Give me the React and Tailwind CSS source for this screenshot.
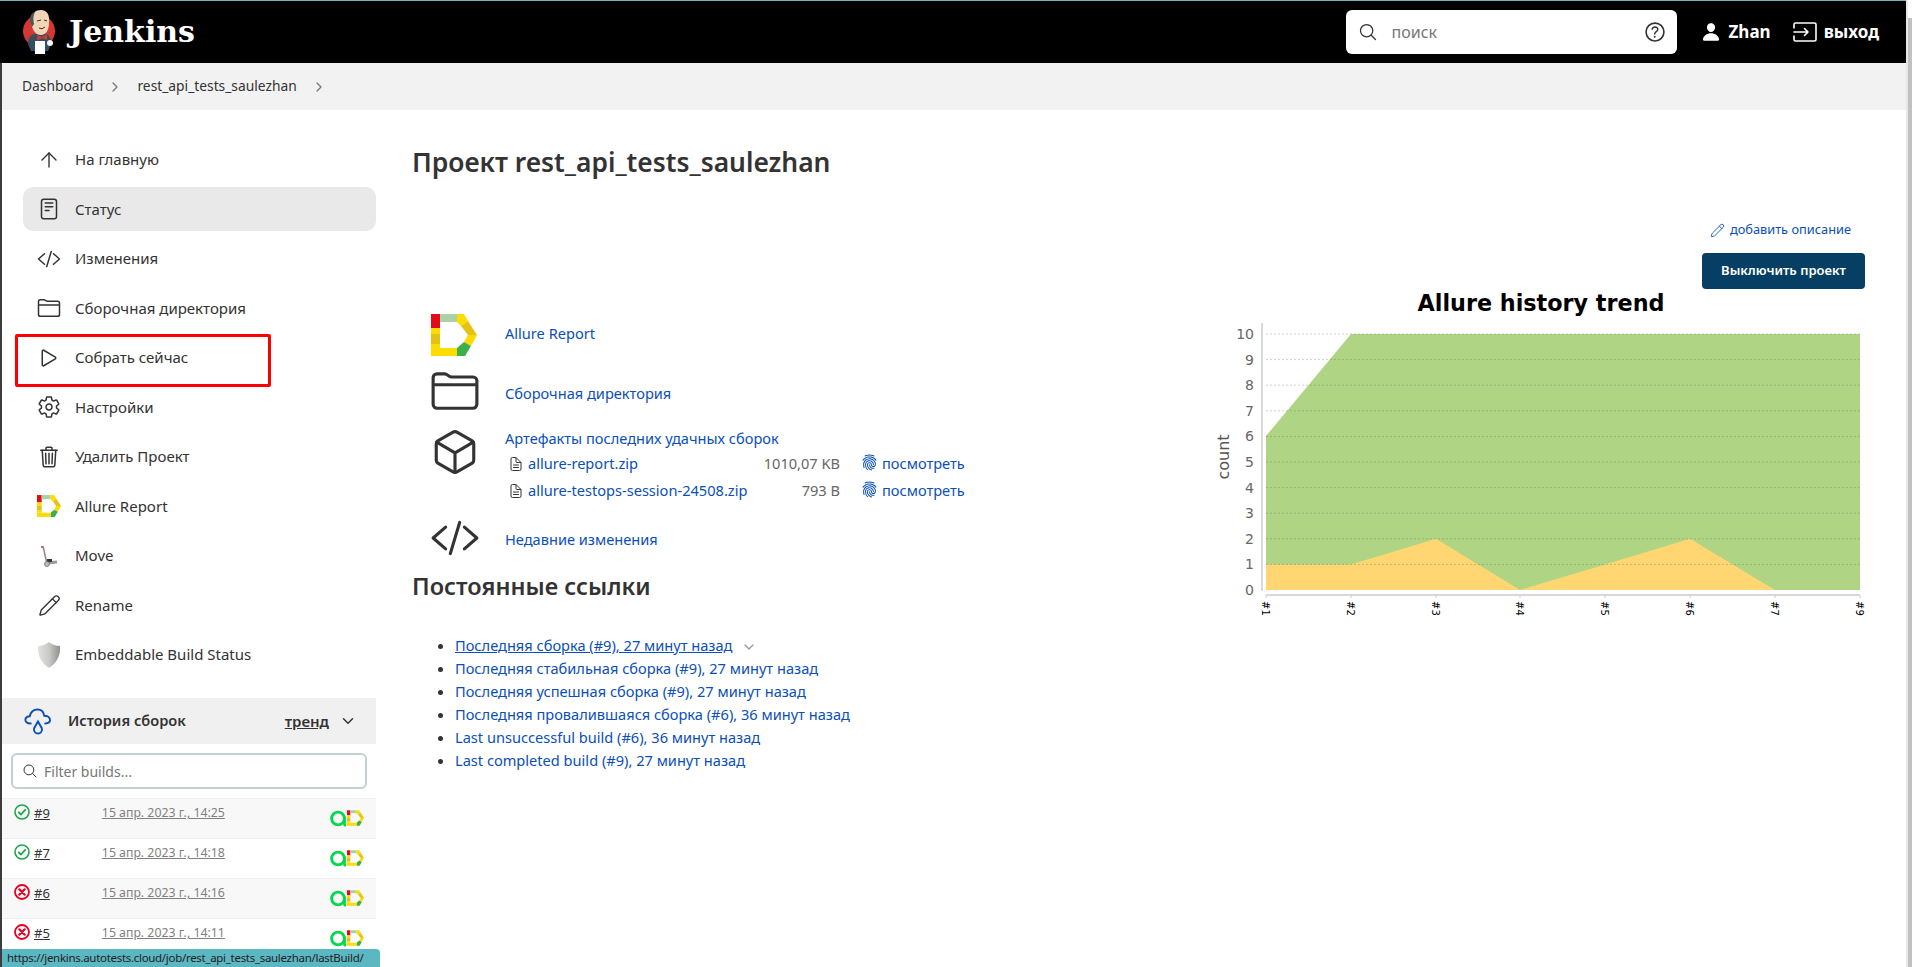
import {
  IoReaderOutline, IoCodeSlashOutline, IoFolderOutline, IoPlayOutline,
  IoSettingsOutline, IoTrashOutline, IoSearchOutline, IoHelpCircleOutline,
  IoPerson, IoCubeOutline, IoFingerPrint, IoChevronForward, IoChevronDown,
  IoDocumentTextOutline,
} from "react-icons/io5"
import { ArrowUp, Pencil } from "lucide-react"

function AllureIcon({ className }) {
  return (
    <svg viewBox="0 0 46 42" className={className}>
      <polygon points="0,0 9,0 9,14 0,14" fill="#e30b17" />
      <polygon points="9,0 26,0 26,8 9,8" fill="#a9d3a4" />
      <polygon points="26,0 33,0 37,7 30,12 26,8" fill="#ffdc00" />
      <polygon points="37,7 46,21 37,21 30,12" fill="#e6c214" />
      <polygon points="46,21 40,32 33,28 37,21" fill="#ffdc00" />
      <polygon points="40,32 34,42 26,42 26,34 33,28" fill="#3cae4a" />
      <polygon points="0,34 26,34 26,42 0,42" fill="#ffdc00" />
      <polygon points="0,14 9,14 9,20 0,20" fill="#ffdc00" />
      <polygon points="0,20 9,20 9,30 0,30" fill="#e3c214" />
      <polygon points="0,30 9,30 9,34 0,34" fill="#ffdc00" />
    </svg>
  )
}

function TestopsIcon() {
  return (
    <svg viewBox="0 0 18 18" className="w-[17px] h-[17px]">
      <circle cx="8.5" cy="9" r="6.8" fill="none" stroke="#00d94c" strokeWidth="3" />
      <path d="M15.3 8V14.5Q15.3 16 17 16" fill="none" stroke="#00d94c" strokeWidth="3" />
    </svg>
  )
}

function JenkinsLogo() {
  return (
    <svg viewBox="0 0 32 44" className="w-[32px] h-[44px]">
      <circle cx="16" cy="21" r="16" fill="#d33833" />
      <path d="M5 34Q5 25 12 24L24 24Q28 27 28 34L25 41H8Z" fill="#335061" />
      <path d="M8 12C7 3 13 0 18 0C24 0 27 5 26 13C26 20 23 25 18 25C12 25 9 19 8 12Z" fill="#f0d6b7" />
      <path d="M8 14C5 6 10 2 12 2C10 6 10 10 11 14L9 17Z" fill="#49555c" />
      <path d="M14 11L18 10M21 10L24 11M16 18Q19 20 22 17" stroke="#49331f" strokeWidth="1" fill="none" />
      <polygon points="14,25 19,27 24,24 24,30 19,28 14,31" fill="#d33833" />
      <rect x="12" y="31" width="10" height="13" fill="#fff" />
      <circle cx="27" cy="33" r="3" fill="#f5f5f5" />
    </svg>
  )
}

function MoveIcon() {
  return (
    <svg viewBox="0 0 20 24" className="w-[20px] h-[24px]">
      <path d="M2 3L4 3" stroke="#c62828" strokeWidth="1.5" />
      <path d="M4 2L8 20" stroke="#8a8a8a" strokeWidth="1.5" />
      <path d="M8 19L18 18" stroke="#9a9a9a" strokeWidth="3" />
      <rect x="8" y="15" width="5" height="3" fill="#333" />
      <circle cx="8" cy="20" r="2.5" fill="#bdbdbd" stroke="#666" strokeWidth="0.7" />
    </svg>
  )
}

function ShieldIcon() {
  return (
    <svg viewBox="0 0 24 26" className="w-[24px] h-[26px]">
      <defs>
        <linearGradient id="shield" x1="0" x2="1" y1="0" y2="0">
          <stop offset="0" stopColor="#e2e2e0" />
          <stop offset="0.5" stopColor="#c9c9c6" />
          <stop offset="1" stopColor="#8f8f8c" />
        </linearGradient>
      </defs>
      <path d="M12 0Q7 4 1 4Q0 18 12 26Q24 18 23 4Q17 4 12 0Z" fill="url(#shield)" />
    </svg>
  )
}

function CloudRainIcon() {
  return (
    <svg viewBox="0 0 28 28" className="w-[27px] h-[27px]" fill="none" stroke="#0b4fb8" strokeWidth="2" strokeLinecap="round">
      <path d="M7 16C3 16 1 14 1.5 11.5C2 9.5 4 8.5 6 8.5C7 4 10 1.5 14 1.5C18 1.5 20.5 4.5 21 8C24 8 27 9.5 27 12.5C27 15 25 16 22 16" />
      <path d="M14.5 14L18.5 21C19.5 24 17 26.5 14.5 26.5C12 26.5 9.5 24 10.5 21Z" />
    </svg>
  )
}

function ExitIcon() {
  return (
    <svg viewBox="0 0 24 20" className="w-[24px] h-[20px]" fill="none" stroke="#fff" strokeWidth="1.6" strokeLinecap="round" strokeLinejoin="round">
      <path d="M1 6V2.5Q1 1 2.5 1H21.5Q23 1 23 2.5V17.5Q23 19 21.5 19H2.5Q1 19 1 17.5V14" />
      <path d="M1 10H15M11.5 6.5L15 10L11.5 13.5" />
    </svg>
  )
}

function BuildStatus({ ok }) {
  if (ok) {
    return (
      <svg viewBox="0 0 16 16" className="w-[16px] h-[16px] mt-[1px] ml-[1px] shrink-0" fill="none" stroke="#1ea64b" strokeWidth="1.6" strokeLinecap="round" strokeLinejoin="round">
        <circle cx="8" cy="8" r="7" />
        <path d="M4.8 8.3L7 10.5L11.2 5.8" strokeWidth="1.8" />
      </svg>
    )
  }
  return (
    <svg viewBox="0 0 16 16" className="w-[16px] h-[16px] mt-[1px] ml-[1px] shrink-0" fill="none" stroke="#e6001f" strokeWidth="1.8" strokeLinecap="round">
      <circle cx="8" cy="8" r="7" />
      <path d="M5.3 5.3L10.7 10.7M10.7 5.3L5.3 10.7" strokeWidth="2.2" />
    </svg>
  )
}

const navItems = [
  { label: "На главную", icon: <ArrowUp className="w-6 h-6" strokeWidth={1.4} /> },
  { label: "Статус", icon: <IoReaderOutline className="w-6 h-6" />, active: true },
  { label: "Изменения", icon: <IoCodeSlashOutline className="w-6 h-6" /> },
  { label: "Сборочная директория", icon: <IoFolderOutline className="w-6 h-6" /> },
  { label: "Собрать сейчас", icon: <IoPlayOutline className="w-6 h-6" />, marked: true },
  { label: "Настройки", icon: <IoSettingsOutline className="w-6 h-6" /> },
  { label: "Удалить Проект", icon: <IoTrashOutline className="w-6 h-6" /> },
  { label: "Allure Report", icon: <AllureIcon className="w-6 h-[22px]" /> },
  { label: "Move", icon: <MoveIcon /> },
  { label: "Rename", icon: <Pencil className="w-[23px] h-[23px]" strokeWidth={1.4} /> },
  { label: "Embeddable Build Status", icon: <ShieldIcon /> },
]

const builds = [
  { num: "#9", date: "15 апр. 2023 г., 14:25", ok: true },
  { num: "#7", date: "15 апр. 2023 г., 14:18", ok: true },
  { num: "#6", date: "15 апр. 2023 г., 14:16", ok: false },
  { num: "#5", date: "15 апр. 2023 г., 14:11", ok: false },
]

const permalinks = [
  "Последняя стабильная сборка (#9), 27 минут назад",
  "Последняя успешная сборка (#9), 27 минут назад",
  "Последняя провалившаяся сборка (#6), 36 минут назад",
  "Last unsuccessful build (#6), 36 минут назад",
  "Last completed build (#9), 27 минут назад",
]

const artifacts = [
  { name: "allure-report.zip", size: "1010,07 KB" },
  { name: "allure-testops-session-24508.zip", size: "793 B" },
]

const chartX = [1266, 1351, 1436, 1520, 1605, 1690, 1775, 1860]
const chartNames = ["#1", "#2", "#3", "#4", "#5", "#6", "#7", "#9"]
const chartY = [589, 563.4, 537.8, 512.2, 486.6, 461, 435.4, 409.8, 384.2, 358.6, 333]

function Chart() {
  return (
    <svg viewBox="1200 288 665 352" className="w-[665px] h-[352px]" fontFamily="'DejaVu Sans', sans-serif">
      <text x="1541" y="310" textAnchor="middle" fontSize="22.3" fontWeight="700" fill="#000">Allure history trend</text>
      <polygon points="1266,435 1351,333 1860,333 1860,589 1266,589" fill="#afd584" />
      <polygon points="1266,563.4 1351,563.4 1436,537.8 1520,589 1605,563.4 1690,537.8 1775,589 1266,589" fill="#ffd672" />
      {chartY.slice(1).map((y) => (
        <line key={y} x1="1266" x2="1860" y1={y} y2={y} stroke="#555" strokeOpacity="0.28" strokeDasharray="2 2" />
      ))}
      {chartY.map((y, i) => (
        <text key={y} x="1254" y={y + 5} textAnchor="end" fontSize="14" fill="#666">{i}</text>
      ))}
      <line x1="1262" x2="1262" y1="322" y2="590" stroke="#ccc" strokeWidth="1.5" />
      <line x1="1266" x2="1860" y1="594" y2="594" stroke="#ccc" strokeWidth="1.5" />
      {chartX.map((x, i) => (
        <g key={x}>
          <line x1={x} x2={x} y1="594" y2="597" stroke="#ccc" />
          <text transform={`translate(${x - 4} 600) rotate(90)`} fontSize="10" fill="#000">{chartNames[i]}</text>
        </g>
      ))}
      <text transform="translate(1229 456) rotate(-90)" textAnchor="middle" fontSize="16" fill="#555">count</text>
    </svg>
  )
}

export default function App() {
  return (
    <div className="relative flex h-screen w-full overflow-hidden bg-white text-[15px] text-[#333] font-['Noto_Sans',sans-serif]">
      <div className="flex-1 min-w-0 flex flex-col">
        <div className="h-[1px] bg-[#7fb0b8]" />

        <header className="h-[62px] bg-black flex items-center pl-[23px] pr-[27px] text-white">
          <JenkinsLogo />
          <span className="ml-[14px] text-[30px] font-bold font-['DejaVu_Serif',serif] leading-none">Jenkins</span>
          <div className="ml-auto w-[331px] h-[44px] bg-white rounded-[6px] flex items-center pl-[12px] pr-[9px]">
            <IoSearchOutline className="w-5 h-5 text-[#333]" />
            <input placeholder="поиск" className="ml-[14px] flex-1 outline-none text-[16px] placeholder:text-[#777]" />
            <IoHelpCircleOutline className="w-[26px] h-[26px] text-[#333]" />
          </div>
          <IoPerson className="ml-[24px] w-[20px] h-[20px]" />
          <span className="ml-[8px] font-bold text-[17px]">Zhan</span>
          <div className="ml-[22px]"><ExitIcon /></div>
          <span className="ml-[7px] font-bold text-[17px]">выход</span>
        </header>

        <nav className="h-[47px] bg-[#f2f2f2] border-l-2 border-[#3c3c3c] flex items-center pl-[20px] text-[13.8px]">
          <span>Dashboard</span>
          <IoChevronForward className="ml-[15px] w-[14px] h-[14px] text-[#777]" />
          <span className="ml-[15px]">rest_api_tests_saulezhan</span>
          <IoChevronForward className="ml-[15px] w-[14px] h-[14px] text-[#777]" />
        </nav>

        <div className="flex-1 flex min-h-0">
          <div className="w-[2px] bg-[#3c3c3c]" />

          <aside className="w-[374px] pt-[27.5px]">
            <div className="pl-[21px]">
              {navItems.map((item) => (
                <div key={item.label} className={`relative h-[44px] mb-[5.5px] flex items-center pl-[14px] gap-[14px] rounded-[10px] ${item.active ? "bg-[#e9e9e9]" : ""}`}>
                  <span className="w-6 h-6 flex items-center justify-center text-[#333]">{item.icon}</span>
                  <span>{item.label}</span>
                  {item.marked && <div className="absolute left-[-8px] top-[-2px] w-[256px] h-[53px] border-[3px] border-[#ff0000] rounded-[2px]" />}
                </div>
              ))}
            </div>

            <div className="mt-[21.5px] h-[46px] bg-[#f0f0f0] flex items-center pl-[22px] pr-[20px]">
              <CloudRainIcon />
              <span className="ml-[17px] text-[14.6px] font-semibold">История сборок</span>
              <span className="ml-auto font-semibold underline">тренд</span>
              <IoChevronDown className="ml-[11px] w-[16px] h-[16px]" />
            </div>

            <div className="mx-[9px] mt-[9px] h-[36px] border-2 border-[#c4d1d4] rounded-[6px] flex items-center pl-[9px]">
              <IoSearchOutline className="w-[16px] h-[16px] text-[#333]" />
              <input placeholder="Filter builds..." className="ml-[6px] flex-1 min-w-0 outline-none text-[14px] placeholder:text-[#777]" />
            </div>

            <div className="mt-[9px]">
              {builds.map((b, i) => (
                <div key={b.num} className={`h-[40px] border-t border-[#eee] flex pl-[11px] pr-[12px] pt-[4px] ${i % 2 === 0 ? "bg-[#f8f8f8]" : ""}`}>
                  <BuildStatus ok={b.ok} />
                  <a className="ml-[4px] text-[13px] underline mt-[1px] leading-[18px]">{b.num}</a>
                  <a className="ml-[52px] text-[12.3px] text-[#808080] underline mt-[1px] leading-[18px]">{b.date}</a>
                  <div className="ml-auto flex mt-[7px] h-[18px]">
                    <TestopsIcon />
                    <AllureIcon className="w-[17px] h-[16px]" />
                  </div>
                </div>
              ))}
            </div>
          </aside>

          <main className="flex-1 min-w-0 pl-[36px] pr-[41px]">
            <h1 className="mt-[35px] text-[26.4px] leading-[34px] font-semibold">Проект rest_api_tests_saulezhan</h1>
            <div className="mt-[41px] flex justify-end items-center h-[20px] pr-[14px] text-[12.8px] text-[#0b4fb8]">
              <Pencil className="w-[15px] h-[15px] mr-[5px]" strokeWidth={1.4} />
              <a>добавить описание</a>
            </div>
            <div className="mt-[13px] flex justify-end">
              <button className="w-[163px] h-[36px] bg-[#063f63] rounded-[4px] text-white text-[13px] font-semibold">Выключить проект</button>
            </div>

            <div className="flex justify-between text-[14.6px]">
              <div className="w-[788px] pt-[24px] text-[#0b4fb8]">
                <div className="flex items-center h-[43px]">
                  <div className="w-[93px] pl-[19px]"><AllureIcon className="w-[46px] h-[42px]" /></div>
                  <a className="-mt-[2px]">Allure Report</a>
                </div>
                <div className="mt-[14px] flex items-center h-[42px]">
                  <div className="w-[93px] pl-[18px] text-[#333]"><IoFolderOutline className="w-[50px] h-[50px]" /></div>
                  <a className="mt-[5px]">Сборочная директория</a>
                </div>
                <div className="mt-[17px] flex h-[75px]">
                  <div className="w-[93px] pl-[18px] text-[#333]"><IoCubeOutline className="w-[50px] h-[50px] -mt-[2px]" /></div>
                  <div className="-mt-[1px]">
                    <a className="block leading-[20px]">Артефакты последних удачных сборок</a>
                    <div className="mt-[2px]">
                      {artifacts.map((f) => (
                        <div key={f.name} className="grid grid-cols-[23px_225px_87px_42px_auto] items-center h-[27px] whitespace-nowrap">
                          <IoDocumentTextOutline className="ml-[3px] w-[16px] h-[16px] text-[#333]" />
                          <a>{f.name}</a>
                          <span className="text-right text-[#666]">{f.size}</span>
                          <IoFingerPrint className="ml-[21px] w-[17px] h-[17px] -mt-[3px]" />
                          <a>посмотреть</a>
                        </div>
                      ))}
                    </div>
                  </div>
                </div>
                <div className="mt-[15px] flex items-center h-[37px]">
                  <div className="w-[93px] pl-[18px] text-[#333]"><IoCodeSlashOutline className="w-[50px] h-[50px]" /></div>
                  <a className="mt-[4px]">Недавние изменения</a>
                </div>

                <h2 className="mt-[15px] text-[23.5px] leading-[30px] font-semibold text-[#333]">Постоянные ссылки</h2>
                <ul className="mt-[33px] ml-[43px] list-disc marker:text-[#333] leading-[23px]">
                  <li>
                    <a className="underline">Последняя сборка (#9), 27 минут назад</a>
                    <IoChevronDown className="inline ml-[10px] w-[14px] h-[14px] text-[#999]" />
                  </li>
                  {permalinks.map((p) => <li key={p}><a>{p}</a></li>)}
                </ul>
              </div>
              <Chart />
            </div>
          </main>
        </div>
      </div>

      <div className="w-[6px] border-l-2 border-[#e8e8e8] pt-[18px] bg-white">
        <div className="h-full bg-[#c1c1c1]" />
      </div>

      <div className="absolute left-[2px] bottom-0 w-[378px] h-[18px] bg-[#5bb7c1] rounded-tr-[4px] pl-[5px] text-[11.5px] tracking-[-0.3px] leading-[18px] text-[#222] whitespace-nowrap overflow-hidden">
        https://jenkins.autotests.cloud/job/rest_api_tests_saulezhan/lastBuild/
      </div>
    </div>
  )
}
